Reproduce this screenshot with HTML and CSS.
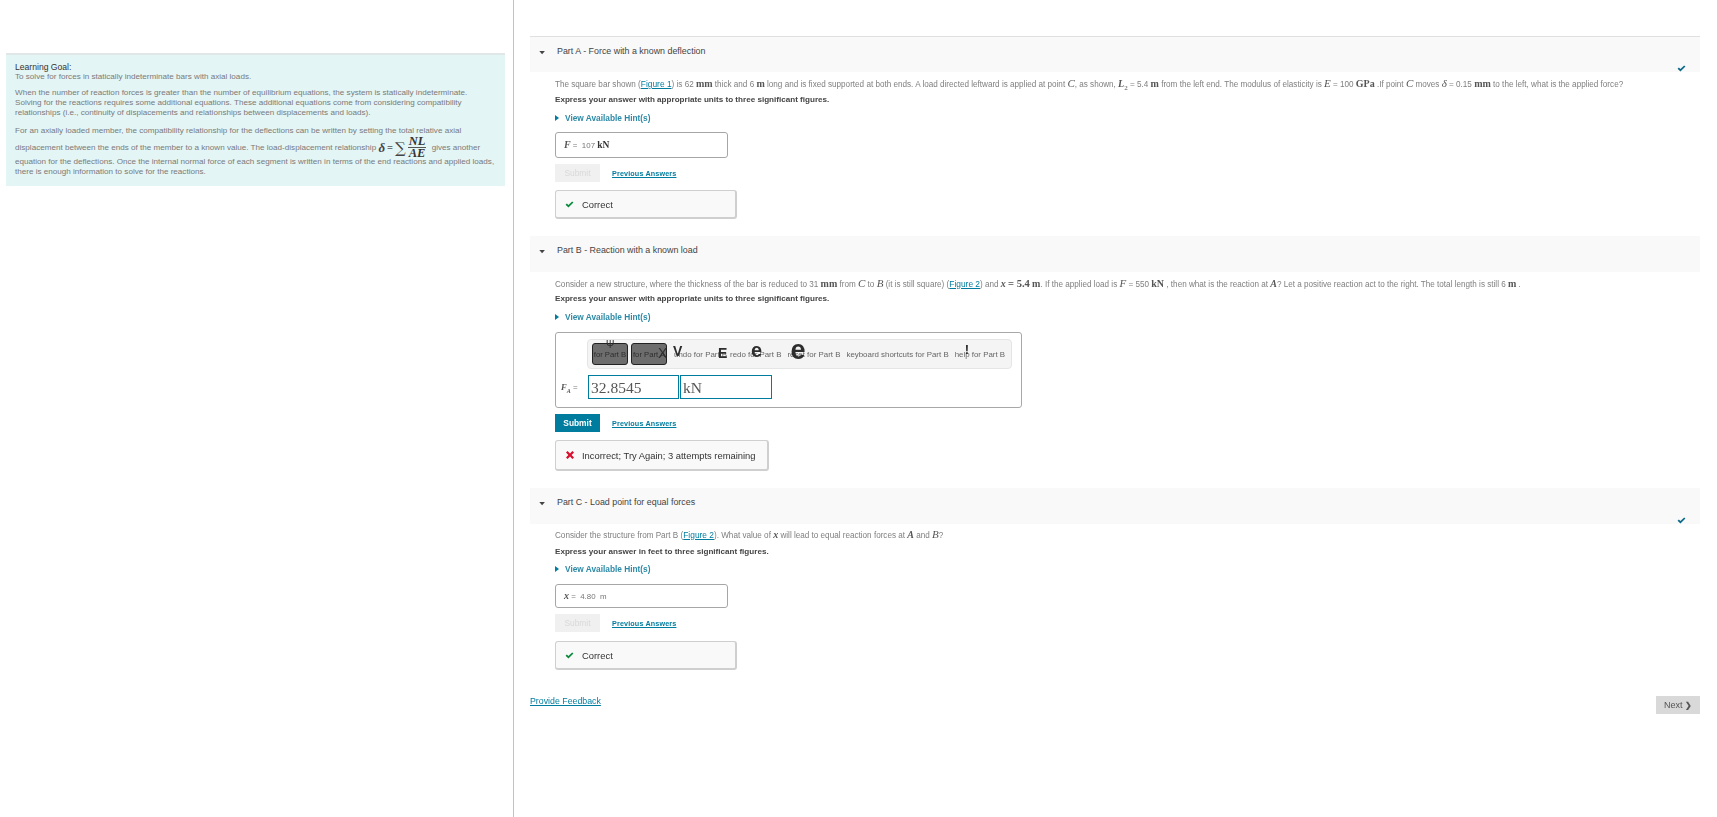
FILE: index.html
```html
<!DOCTYPE html>
<html lang="en">
<head>
<meta charset="utf-8">
<title>Learning Goal</title>
<link rel="stylesheet" href="styles.css">
</head>
<body>
<div class="page">
  <aside class="side">
    <section class="goal">
      <div class="goal-title">Learning Goal:</div>
      <p class="goal-first">To solve for forces in statically indeterminate bars with axial loads.</p>
      <p class="goal-para">When the number of reaction forces is greater than the number of equilibrium equations, the system is statically indeterminate.<br>Solving for the reactions requires some additional equations. These additional equations come from considering compatibility<br>relationships (i.e., continuity of displacements and relationships between displacements and loads).</p>
      <p class="goal-para2">For an axially loaded member, the compatibility relationship for the deflections can be written by setting the total relative axial</p>
      <p class="goal-formula">displacement between the ends of the member to a known value. The load-displacement relationship <b class="mi f-delta">δ</b><span class="mn f-eq">=</span><span class="f-sum">∑</span><span class="frac"><b class="mi">NL</b><b class="mi den">AE</b></span> gives another</p>
      <p class="goal-last">equation for the deflections. Once the internal normal force of each segment is written in terms of the end reactions and applied loads,<br>there is enough information to solve for the reactions.</p>
    </section>
  </aside>

  <main class="main">
    <section class="part part-a">
      <header class="part-head">
        <svg class="caret" viewBox="0 0 8 5"><path d="M0 0h7L3.500 4z"/></svg>
        <span>Part A - Force with a known deflection</span>
        <svg class="done" viewBox="0 0 10 8"><path d="M.5 4.200 2 2.800l1.800 1.700L8 .5 9.500 1.700 3.800 7.500z"/></svg>
      </header>
      <div class="part-body">
        <p class="statement">The square bar shown (<a href="#">Figure 1</a>) is 62 <span class="mu">mm</span> thick and 6 <span class="mu">m</span> long and is fixed supported at both ends. A load directed leftward is applied at point <i class="mv">C</i>, as shown, <i class="mv b">L</i><sub class="b">2</sub> = 5.4 <span class="mu">m</span> from the left end. The modulus of elasticity is <i class="mv">E</i> = 100 <span class="mu">GPa</span> .If point <i class="mv">C</i> moves <i class="mv">δ</i> = 0.15 <span class="mu">mm</span> to the left, what is the applied force?</p>
        <p class="express">Express your answer with appropriate units to three significant figures.</p>
        <div class="hints"><span class="tri"></span>View Available Hint(s)</div>
        <div class="answer"><i class="mv b">F</i> = &nbsp;107 <span class="mu">kN</span></div>
        <div class="actions"><button class="submit off">Submit</button><a class="prev" href="#">Previous Answers</a></div>
        <div class="feedback fb-ok">
          <svg class="ok" viewBox="0 0 10 8"><path d="M.5 4.200 2 2.800l1.800 1.700L8 .5 9.500 1.700 3.800 7.500z"/></svg>
          <span>Correct</span>
        </div>
      </div>
    </section>

    <section class="part part-b">
      <header class="part-head">
        <svg class="caret" viewBox="0 0 8 5"><path d="M0 0h7L3.500 4z"/></svg>
        <span>Part B - Reaction with a known load</span>
      </header>
      <div class="part-body">
        <p class="statement">Consider a new structure, where the thickness of the bar is reduced to 31 <span class="mu">mm</span> from <i class="mv">C</i> to <i class="mv">B</i> (it is still square) (<a href="#">Figure 2</a>) and <i class="mv b">x</i> <span class="mn">= 5.4</span> <span class="mu">m</span>. If the applied load is <i class="mv">F</i> = 550 <span class="mu">kN</span> , then what is the reaction at <i class="mv b">A</i>? Let a positive reaction act to the right. The total length is still 6 <span class="mu">m</span> .</p>
        <p class="express">Express your answer with appropriate units to three significant figures.</p>
        <div class="hints"><span class="tri"></span>View Available Hint(s)</div>
        <div class="editor">
          <div class="toolbar">
            <button class="tool">for Part B<span class="glyph g-psi">Ψ</span></button>
            <button class="tool">for Part A<span class="glyph g-x">X</span></button>
            <span class="tool-text t-undo">undo for Part B<span class="glyph g-v">V</span><span class="glyph g-e1">E</span></span>
            <span class="tool-text t-redo">redo for Part B<span class="glyph g-e2">e</span></span>
            <span class="tool-text t-reset">reset for Part B<span class="glyph g-e3">e</span></span>
            <span class="tool-text">keyboard shortcuts for Part B</span>
            <span class="tool-text t-help">help for Part B<span class="glyph g-i">!</span></span>
          </div>
          <div class="entry">
            <span class="entry-label"><i class="mv b">F<sub>A</sub></i> =</span>
            <span class="field">32.8545</span>
            <span class="field">kN</span>
          </div>
        </div>
        <div class="actions"><button class="submit">Submit</button><a class="prev" href="#">Previous Answers</a></div>
        <div class="feedback fb-bad">
          <svg class="bad" viewBox="0 0 10 10"><path d="M1 2.600 2.600 1 5 3.400 7.400 1 9 2.600 6.600 5 9 7.400 7.400 9 5 6.600 2.600 9 1 7.400 3.400 5z"/></svg>
          <span>Incorrect; Try Again; 3 attempts remaining</span>
        </div>
      </div>
    </section>

    <section class="part part-c">
      <header class="part-head">
        <svg class="caret" viewBox="0 0 8 5"><path d="M0 0h7L3.500 4z"/></svg>
        <span>Part C - Load point for equal forces</span>
        <svg class="done" viewBox="0 0 10 8"><path d="M.5 4.200 2 2.800l1.800 1.700L8 .5 9.500 1.700 3.800 7.500z"/></svg>
      </header>
      <div class="part-body">
        <p class="statement">Consider the structure from Part B (<a href="#">Figure 2</a>). What value of <i class="mv b">x</i> will lead to equal reaction forces at <i class="mv b">A</i> and <i class="mv">B</i>?</p>
        <p class="express">Express your answer in feet to three significant figures.</p>
        <div class="hints"><span class="tri"></span>View Available Hint(s)</div>
        <div class="answer short"><i class="mv b">x</i> = &nbsp;4.80 &nbsp;m</div>
        <div class="actions"><button class="submit off">Submit</button><a class="prev" href="#">Previous Answers</a></div>
        <div class="feedback fb-ok">
          <svg class="ok" viewBox="0 0 10 8"><path d="M.5 4.200 2 2.800l1.800 1.700L8 .5 9.500 1.700 3.800 7.500z"/></svg>
          <span>Correct</span>
        </div>
      </div>
    </section>

    <footer class="foot">
      <a class="provide" href="#">Provide Feedback</a>
      <button class="next">Next <b>❯</b></button>
    </footer>
  </main>
</div>
</body>
</html>
```
FILE: styles.css
```css
* { box-sizing: border-box; }
html, body { margin: 0; padding: 0; background: #fff; }
body { font-family: "Liberation Sans", Arial, sans-serif; color: #7a7a7a; overflow: hidden; }
p { margin: 0; }
a { color: #007c9e; }
button { font-family: inherit; }

.page { display: flex; width: 1717px; height: 817px; filter: blur(0.3px); }

/* left column */
.side { width: 513px; flex: none; padding: 53px 8px 0 6px; }
.goal { height: 133px; background: #e4f5f5; border-top: 2px solid #e1e6e6; padding: 7px 0 0 9px; font-size: 8.1px; line-height: 10px; white-space: nowrap; overflow: hidden; }
.goal-title { color: #333; font-size: 8.6px; }
.goal-para { margin-top: 6px; }
.goal-para2 { margin-top: 8px; }
.goal-formula { display: flex; align-items: center; height: 21px; margin-top: 1px; white-space: pre; }
.goal-last { margin-top: -1px; }
.f-delta { font-family: "Liberation Serif", serif; font-style: italic; font-size: 13px; color: #444; }
.f-eq { font-size: 14px; margin: 0 2px; color: #444; font-family: "Liberation Serif", serif; }
.f-sum { font-size: 15px; color: #444; font-family: "DejaVu Serif", serif; }
.frac { display: inline-flex; flex-direction: column; align-items: center; margin: 0 3px 0 2px; line-height: 11px; }
.frac .mi { font-family: "Liberation Serif", serif; font-style: italic; font-size: 12.500px; color: #333; }
.frac .den { border-top: 1px solid #555; padding: 0 1px; }

/* divider and right column */
.main { width: 1204px; flex: none; border-left: 1px solid #b4c7da; padding: 36px 17px 0 16px; }
.part-head { position: relative; display: flex; align-items: flex-start; height: 36px; padding: 8px 0 0 27px; background: #f9f9f9; font-size: 8.9px; line-height: 12px; color: #444; }
.part-a .part-head { border-top: 1px solid #e0e0e0; }
.part-a .part-body { padding-bottom: 17px; }
.part-b .part-body { padding-bottom: 17px; }
.part-c .part-body { padding-top: 2px; padding-bottom: 17px; }
.caret { position: absolute; left: 9px; top: 14px; width: 7px; height: 4px; fill: #444; }
.done { position: absolute; right: 14px; bottom: 0; width: 9px; height: 7px; fill: #0c6a88; }
.part-body { padding: 3px 0 0 25px; }

.statement { height: 16px; font-size: 8.15px; line-height: 16px; white-space: nowrap; color: #808080; }
.part-a .statement { height: 17px; }
.part-c .statement { height: 18px; }
.statement a { font-size: 8.4px; }
.mu { font-family: "Liberation Serif", serif; font-weight: bold; font-size: 10px; color: #555; }
.mv { font-family: "Liberation Serif", serif; font-style: italic; font-size: 11px; color: #555; }
.mv.b { font-weight: bold; font-size: 10px; }
.mn { font-family: "Liberation Serif", serif; font-weight: bold; font-size: 10.500px; color: #555; }
sub.b { font-family: "Liberation Serif", serif; font-weight: bold; font-size: 7px; line-height: 0; }

.express { height: 15px; font-size: 8.1px; font-weight: bold; line-height: 15px; color: #444; white-space: nowrap; }
.hints { display: flex; align-items: center; height: 16px; margin-top: 3px; font-size: 8.3px; font-weight: bold; color: #2c8aa6; }
.part-c .hints { margin-top: 2px; }
.tri { width: 0; height: 0; margin-right: 6px; border-left: 4px solid #007c9e; border-top: 3px solid transparent; border-bottom: 3px solid transparent; }

.answer { width: 173px; height: 26px; margin-top: 6px; padding-left: 8px; border: 1px solid #a6a6a6; border-radius: 3px; font-size: 7.9px; line-height: 23px; color: #777; }
.answer.short { height: 24px; margin-top: 7px; line-height: 22px; }
.answer .mu { font-size: 9.500px; color: #333; }

.actions { display: flex; align-items: center; height: 18px; margin-top: 6px; }
.submit { width: 45px; height: 18px; padding: 0; border: 0; background: #007c9e; color: #fff; font-size: 8.4px; font-weight: bold; }
.submit.off { background: #f0f0f0; color: #d9d9d9; font-weight: normal; }
.prev { margin-left: 12px; font-size: 7.2px; font-weight: bold; letter-spacing: .15px; }

.feedback { display: flex; align-items: center; height: 29px; margin-top: 8px; border: 1px solid #cfcfcf; border-right-width: 2px; border-bottom-width: 2px; border-radius: 3px; background: #f9f9f9; font-size: 9.400px; color: #333; }
.part-c .feedback { margin-top: 9px; }
.fb-ok { width: 182px; padding-left: 9px; }
.fb-bad { width: 214px; height: 31px; padding-left: 9px; }
.ok { width: 9px; height: 7px; margin-right: 8px; fill: #0b8a3e; }
.bad { width: 10px; height: 10px; margin-right: 7px; fill: #d80f2e; }

/* Part B editor */
.editor { width: 467px; height: 76px; margin-top: 7px; padding: 6px 0 0 31px; border: 1px solid #a8a8a8; border-radius: 3px; }
.toolbar { display: flex; align-items: center; width: 425px; height: 30px; padding-left: 4px; background: #f4f4f4; border: 1px solid #e5e5e5; border-radius: 4px; font-size: 7.9px; color: #666; white-space: nowrap; }
.tool { position: relative; width: 36px; height: 22px; margin-right: 3px; padding: 0; border: 1px solid #222; border-radius: 3px; background: #6d6d6d; color: #2e2e2e; font-size: 7.7px; white-space: nowrap; overflow: visible; }
.tool-text { position: relative; margin-left: 6px; }
.t-undo { margin-left: 4px; }
.t-redo { margin-left: 3px; }
.glyph { position: absolute; color: #2d2d2d; font-weight: bold; line-height: 1; }
.g-psi { left: 13px; top: -4px; font-size: 10px; font-weight: normal; }
.g-x { left: 26px; top: 2px; font-size: 14px; font-weight: normal; }
.g-v { left: -1px; top: -6px; font-size: 14px; }
.g-e1 { left: 44px; top: -4px; font-size: 14px; }
.g-e2 { left: 21px; top: -10px; font-size: 20px; }
.g-e3 { left: 3px; top: -13px; font-size: 27px; }
.g-i { left: 10px; top: -7px; font-size: 13px; }

.entry { display: flex; align-items: center; gap: 1px; height: 24px; margin-top: 6px; margin-left: -26px; }
.entry-label { width: 26px; font-size: 8px; text-align: left; }
.entry-label .mv { font-size: 8.500px; }
.entry-label sub { font-size: 6px; line-height: 0; }
.field { width: 91px; height: 24px; border: 1px solid #007c9e; padding-left: 2px; font-family: "Liberation Serif", serif; font-size: 15.500px; line-height: 23px; color: #555; }
.field + .field { width: 92px; }

/* footer */
.foot { display: flex; justify-content: space-between; align-items: flex-start; }
.provide { margin-top: 9px; font-size: 8.800px; }
.next { width: 44px; height: 18px; margin-top: 9px; padding: 0; border: 0; background: #d9d9d9; color: #555; font-size: 9px; }
.next b { font-size: 8px; }
```
